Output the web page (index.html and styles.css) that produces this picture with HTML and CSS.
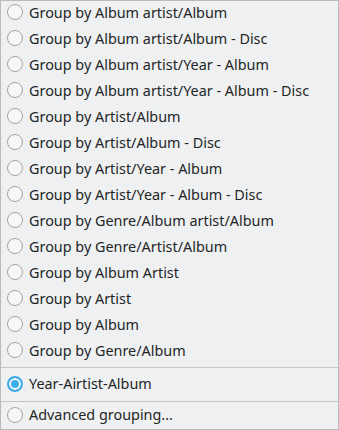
FILE: index.html
```html
<!DOCTYPE html>
<html>
  <head>
    <title>Grouping</title>
    <meta charset="UTF-8">
    <link rel="stylesheet" href="styles.css">
  </head>
  <body>
    <div class="menu">
      <div class="group">
        <div class="item"><span class="radio"></span>Group by Album artist/Album</div>
        <div class="item"><span class="radio"></span>Group by Album artist/Album - Disc</div>
        <div class="item"><span class="radio"></span>Group by Album artist/Year - Album</div>
        <div class="item"><span class="radio"></span>Group by Album artist/Year - Album - Disc</div>
        <div class="item"><span class="radio"></span>Group by Artist/Album</div>
        <div class="item"><span class="radio"></span>Group by Artist/Album - Disc</div>
        <div class="item"><span class="radio"></span>Group by Artist/Year - Album</div>
        <div class="item"><span class="radio"></span>Group by Artist/Year - Album - Disc</div>
        <div class="item"><span class="radio"></span>Group by Genre/Album artist/Album</div>
        <div class="item"><span class="radio"></span>Group by Genre/Artist/Album</div>
        <div class="item"><span class="radio"></span>Group by Album Artist</div>
        <div class="item"><span class="radio"></span>Group by Artist</div>
        <div class="item"><span class="radio"></span>Group by Album</div>
        <div class="item"><span class="radio"></span>Group by Genre/Album</div>
      </div>
      <div class="separator"></div>
      <div class="item saved"><span class="radio checked"></span>Year-Airtist-Album</div>
      <div class="separator"></div>
      <div class="item last"><span class="radio"></span>Advanced grouping...</div>
    </div>
  </body>
</html>
```
FILE: styles.css
```css
body {
    margin: 0;
    font-family: "Noto Sans", sans-serif;
    font-size: 14.4px;
    color: #232627;
}
.menu {
    width: 337px;
    height: 428px;
    border: 1px solid #b9babb;
    background-color: #eff0f1;
    display: flex;
    flex-direction: column;
}
.item {
    box-sizing: border-box;
    height: 26px;
    display: flex;
    align-items: center;
    padding-left: 6px;
    padding-bottom: 4px;
    white-space: nowrap;
}
.item.saved {
    height: 33px;
    padding-bottom: 2px;
}
.item.last {
    height: 27px;
    padding-bottom: 2px;
}
.separator {
    height: 1px;
    background-color: #c4c6c7;
}
.group + .separator {
    margin-top: 2px;
}
.radio {
    box-sizing: border-box;
    width: 16px;
    height: 16px;
    border: 1px solid #a2a4a6;
    border-radius: 50%;
    background-color: #f7f7f7;
    margin-right: 6px;
    flex-shrink: 0;
}
.radio.checked {
    border: 2px solid #3daee9;
    background-color: #3daee9;
    box-shadow: inset 0 0 0 2px #fcfcfc;
}
```
